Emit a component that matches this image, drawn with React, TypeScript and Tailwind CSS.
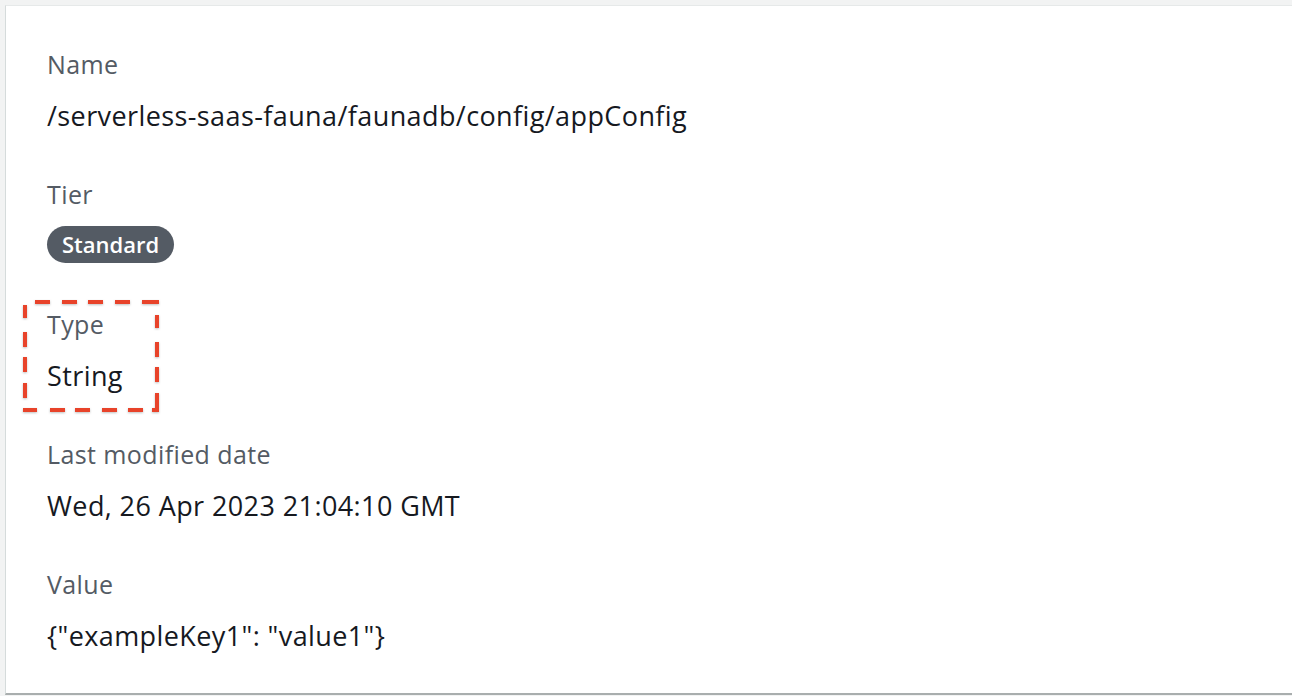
import React from "react";

const rows = [
    { label: "Name", value: "/serverless-saas-fauna/faunadb/config/appConfig" },
    { label: "Tier", badge: "Standard" },
    { label: "Type", value: "String", marked: true },
    { label: "Last modified date", value: "Wed, 26 Apr 2023 21:04:10 GMT" },
    { label: "Value", value: '{"exampleKey1": "value1"}' },
];

// dash segments of the hand-drawn highlight box, per edge
const top = [[14, 29], [41, 56], [67, 82], [94, 109], [121, 138]];
const bottom = [[2, 16], [29, 44], [54, 69], [81, 96], [107, 122], [131, 138]];
const left = [[7, 20], [34, 49], [59, 74], [85, 100]];
const right = [[17, 30], [44, 59], [69, 84], [95, 110]];

function DashedBox() {
    return (
        <svg className="absolute left-[-26px] top-[-6px] pointer-events-none drop-shadow-[0_1px_1px_rgba(0,0,0,0.25)]"
             width="142" height="118" viewBox="0 0 142 118">
            <g stroke="#e8432a" strokeWidth="4" fill="none">
                {top.map(([a, b]) => <line key={"t" + a} x1={a} y1={4} x2={b} y2={4} />)}
                {bottom.map(([a, b]) => <line key={"b" + a} x1={a} y1={112} x2={b} y2={112} />)}
                {left.map(([a, b]) => <line key={"l" + a} x1={4} y1={a} x2={4} y2={b} />)}
                {right.map(([a, b]) => <line key={"r" + a} x1={136} y1={a} x2={136} y2={b} />)}
            </g>
        </svg>
    );
}

export default function App() {
    return (
        <div className="h-[696px] w-[1292px] bg-[#f2f3f3] pt-[5px] pl-[5px] overflow-hidden"
             style={{ fontFamily: '"Open Sans", "Noto Sans", sans-serif' }}>
            <div className="h-[690px] bg-white border-l border-t border-b-2 border-l-[#d5dbdb] border-t-[#e6e9e9] border-b-[#a9aeae] pl-[41px] pt-[38px]">
                {rows.map((r) => (
                    <div key={r.label} className="relative h-[130px]">
                        {r.marked && <DashedBox />}
                        <div className="text-[25px] leading-[40px] tracking-[0.4px] text-[#545b64]">{r.label}</div>
                        {r.badge ? (
                            <div className="mt-[12px] inline-flex items-center h-[37px] px-[15px] rounded-full bg-[#545b64] text-white text-[22px] font-semibold">
                                {r.badge}
                            </div>
                        ) : (
                            <div className="mt-[12px] text-[27px] leading-[40px] tracking-[0.4px] text-[#16191f]">{r.value}</div>
                        )}
                    </div>
                ))}
            </div>
        </div>
    );
}
